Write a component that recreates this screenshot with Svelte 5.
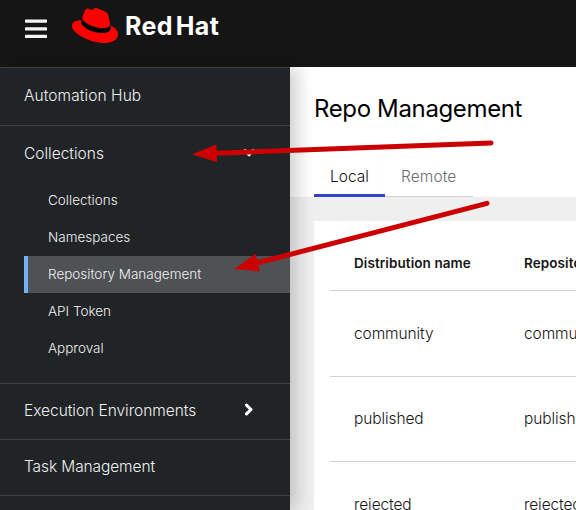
<script>
  const sub = [
    ['Collections', 'c'],
    ['Namespaces', 'n'],
    ['Repository Management', 'r'],
    ['API Token', 'a'],
    ['Approval', 'p']
  ];
  const rows = ['community', 'published', 'rejected'];
</script>

<div class="app">
  <header>
    <svg class="menu" width="22" height="20" viewBox="0 0 22 20" fill="#f5f5f5">
      <rect x="0" y="0.5" width="22" height="3.2" rx=".6" />
      <rect x="0" y="8.2" width="22" height="3.2" rx=".6" />
      <rect x="0" y="15.8" width="22" height="3.2" rx=".6" />
    </svg>
    <svg class="hat" width="46" height="35" viewBox="0 2.9 24 18.2">
      <path d="M5.5 9L19.5 11V15L16 16L9 14.5L5 11.5Z" fill="#000" />
      <path fill="#f00" d="M16.009 13.386c1.577 0 3.86-.326 3.86-2.202a1.765 1.765 0 0 0-.04-.431l-.94-4.08c-.216-.898-.406-1.305-1.982-2.093-1.223-.625-3.888-1.658-4.676-1.658-.733 0-.947.946-1.822.946-.842 0-1.467-.706-2.255-.706-.757 0-1.25.515-1.63 1.576 0 0-1.06 2.99-1.197 3.424a.81.81 0 0 0-.028.245c0 1.162 4.577 4.974 10.71 4.974m4.101-1.435c.218 1.032.218 1.14.218 1.277 0 1.765-1.984 2.745-4.593 2.745-5.895.004-11.06-3.451-11.06-5.734a2.326 2.326 0 0 1 .19-.925C2.746 9.415 0 9.794 0 12.217c0 3.969 9.405 8.861 16.851 8.861 5.71 0 7.149-2.582 7.149-4.62 0-1.605-1.387-3.425-3.887-4.512" />
    </svg>
    <span class="brand">Red Hat</span>
  </header>
  <div class="body">
    <nav>
      <div class="item first"><span class="hub">Automation Hub</span></div>
      <div class="group">
        <div class="item"><span class="coll">Collections</span>
          <svg class="chev down" width="12" height="14" viewBox="0 0 12 14"><path d="M2 4.5L6 8.8L10 4.5" /></svg>
        </div>
        {#each sub as [label, key]}
          <div class="sub" class:active={key === 'r'}><span class={key}>{label}</span></div>
        {/each}
      </div>
      <div class="item"><span class="exec">Execution Environments</span>
        <svg class="chev" width="12" height="14" viewBox="0 0 12 14"><path d="M3.5 2.1L8 6.5L3.5 10.9" /></svg>
      </div>
      <div class="item"><span class="task">Task Management</span></div>
      <div class="item"></div>
    </nav>
    <main>
      <section class="head">
        <h1>Repo Management</h1>
        <div class="tabs">
          <div class="tab on"><span class="local">Local</span></div>
          <div class="tab"><span class="remote">Remote</span></div>
        </div>
      </section>
      <section class="card">
        <div class="row th"><span class="dist">Distribution name</span><span class="repo">Repository name</span></div>
        {#each rows as name}
          <div class="row"><span class={name}>{name}</span><span class={name}>{name}</span></div>
        {/each}
      </section>
    </main>
  </div>
  <svg class="arrows" width="576" height="510" viewBox="0 0 576 510">
    <g stroke="#c00" stroke-width="5" stroke-linecap="round" fill="#c00">
      <path d="M491 143L215 153.3" />
      <path stroke="none" d="M192 154.3L216.3 144.5L217 162.3Z" />
      <path d="M487 203.3L257 263" />
      <path stroke="none" d="M234 269L255.5 254L260 271.5Z" />
    </g>
  </svg>
</div>

<style>
  :global(body) { overflow: hidden; }
  .app { position: relative; width: 576px; height: 510px; overflow: hidden; background: #efefef; color: #151515; font: 15.5px/24px Inter, "Open Sans", sans-serif; white-space: nowrap; display: flex; flex-direction: column; }
  .app * { box-sizing: border-box; }
  header { height: 67px; flex: none; background: #151515; display: flex; align-items: flex-start; padding-left: 25px; }
  svg { display: block; flex: none; }
  .menu { margin-top: 19px; }
  .hat { margin: 8px 0 0 25px; }
  .brand { margin: 9px 0 0 7px; color: #fff; font-size: 25px; line-height: 34px; font-weight: 750; letter-spacing: .4px; word-spacing: -3.5px; }
  .body { flex: 1; display: flex; min-height: 0; }
  nav { width: 290px; flex: none; background: #212427; color: #f0f0f0; box-shadow: 8px 0 16px rgba(3,3,3,.18); z-index: 1; font-weight: 300; }
  .item { height: 56px; padding: 0 35px 2px 24px; display: flex; align-items: center; justify-content: space-between; border-bottom: 1px solid #3c3f42; }
  .first { height: 59px; border-top: 1px solid #3c3f42; }
  .group { padding-bottom: 16px; border-bottom: 1px solid #3c3f42; }
  .group .item { border: 0; padding-bottom: 0; }
  .hub { letter-spacing: .08px; }
  .exec { letter-spacing: -.03px; }
  .task { letter-spacing: -.1px; }
  .chev path { fill: none; stroke: #fff; stroke-width: 3; stroke-linecap: round; stroke-linejoin: round; }
  .chev { margin-top: -2px; }
  .sub { height: 37px; margin-left: 24px; padding: 0 0 2px 20px; border-left: 4px solid transparent; display: flex; align-items: center; font-size: 13.5px; }
  .active { background: #4f5255; border-color: #73b1f7; }
  main { flex: 1; min-width: 0; overflow: hidden; }
  .head { height: 130px; background: #fff; padding: 24px 0 0 24px; }
  h1 { margin: 0; height: 66px; font-size: 24px; line-height: 36px; font-weight: 400; color: #000; letter-spacing: -.36px; }
  .tabs { display: flex; width: 159px; height: 40px; }
  .tab { padding: 8px 16px 0; color: #6a6e73; border-bottom: 1px solid #d2d2d2; flex: 1; font-weight: 300; }
  .remote { letter-spacing: .1px; }
  .on { flex: 0 0 71px; color: #151515; border-bottom: 3px solid #3442ce; }
  .card { margin: 24px 0 0 24px; background: #fff; padding-left: 16px; height: 310px; }
  .row { height: 85.5px; display: grid; grid-template-columns: 170px 1fr; align-items: center; padding: 1.2px 0 0 24px; border-bottom: 1px solid #d2d2d2; font-weight: 300; letter-spacing: -.1px; }
  .th { height: 70px; padding-top: 15px; font-size: 13.5px; font-weight: 600; letter-spacing: .08px; }
  .arrows { position: absolute; left: 0; top: 0; z-index: 2; }
</style>
